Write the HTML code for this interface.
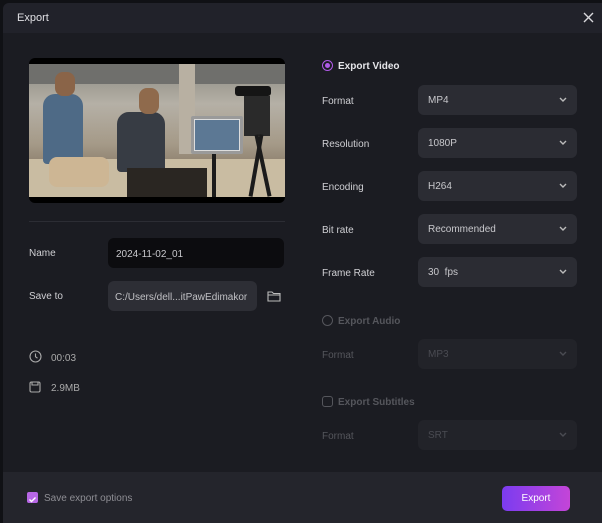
<!DOCTYPE html>
<html><head><style>
*{margin:0;padding:0;box-sizing:border-box}
body{width:602px;height:523px;background:#101115;font-family:"Liberation Sans",sans-serif;overflow:hidden;position:relative;color:#d8d8dc}
.win{position:absolute;left:3px;top:3px;right:0;bottom:0;background:#1b1c22;border-radius:6px 0 0 0;overflow:hidden}
.hdr{position:absolute;left:0;top:0;right:0;height:30px;background:#21222a;}
.hdr span{position:absolute;left:14px;top:9px;font-size:11px;color:#e0e0e4}
.ft{position:absolute;left:0;right:0;top:469px;bottom:0;background:#24252c}
.a{position:absolute;font-size:10px}
.lbl{color:#d0d0d4}
.sel{position:absolute;left:415px;width:159px;height:30px;background:#2b2c33;border-radius:6px;font-size:10px;color:#c8c8cc;padding:10px 0 0 10px}
.sel.dis{background:#222329;color:#4a4b52}
.sel svg{position:absolute;right:10px;top:12px}
</style></head><body>
<div class="win">
<div class="hdr"><span>Export</span>
<svg style="position:absolute;right:8px;top:9px" width="11" height="11"><path d="M1 1L10 10M10 1L1 10" stroke="#d8d8dc" stroke-width="1.4"/></svg></div>
<div style="position:absolute;left:26px;top:55px;width:256px;height:145px;background:#000;border-radius:6px"></div>
<div style="position:absolute;left:26px;top:61px;width:256px;height:133px;overflow:hidden;background:linear-gradient(180deg,#8a8880 0%,#b5b0a6 30%,#a59a88 60%,#6a5a48 100%)">
 <div style="position:absolute;left:0;top:0;width:256px;height:20px;background:#6f6f6c"></div>
 <div style="position:absolute;left:150px;top:0;width:16px;height:90px;background:#b8b0a2"></div>
 <div style="position:absolute;left:0;top:95px;width:256px;height:38px;background:#c9bca2"></div>
 <div style="position:absolute;left:14px;top:30px;width:40px;height:70px;background:#4e6a86;border-radius:12px 12px 4px 4px"></div>
 <div style="position:absolute;left:26px;top:8px;width:20px;height:24px;background:#8a6448;border-radius:8px"></div>
 <div style="position:absolute;left:20px;top:93px;width:60px;height:30px;background:#cdb694;border-radius:8px"></div>
 <div style="position:absolute;left:88px;top:48px;width:48px;height:60px;background:#373c44;border-radius:12px 12px 4px 4px"></div>
 <div style="position:absolute;left:110px;top:24px;width:20px;height:26px;background:#8f6a4c;border-radius:8px"></div>
 <div style="position:absolute;left:98px;top:104px;width:80px;height:30px;background:#2a2622"></div>
 <div style="position:absolute;left:162px;top:52px;width:52px;height:38px;background:#ddd;border-radius:2px;border:3px solid #9a9a9a"></div>
 <div style="position:absolute;left:166px;top:56px;width:44px;height:30px;background:#5c7894"></div>
 <div style="position:absolute;left:206px;top:22px;width:36px;height:10px;background:#151515;border-radius:3px"></div>
 <div style="position:absolute;left:215px;top:32px;width:26px;height:40px;background:#2a2a2a"></div>
 <div style="position:absolute;left:225px;top:70px;width:4px;height:63px;background:#1b1b1b;transform:rotate(10deg)"></div>
 <div style="position:absolute;left:232px;top:70px;width:4px;height:63px;background:#1b1b1b;transform:rotate(-12deg)"></div>
 <div style="position:absolute;left:183px;top:90px;width:4px;height:43px;background:#1b1b1b"></div>
</div>
<div style="position:absolute;left:26px;top:218px;width:256px;height:1px;background:#2c2d34"></div>
<div class="a lbl" style="left:26px;top:245px">Name</div>
<div style="position:absolute;left:105px;top:235px;width:176px;height:30px;background:#0c0c0f;border-radius:6px;font-size:10px;color:#c8c8cc;padding:11px 0 0 8px">2024-11-02_01</div>
<div class="a lbl" style="left:26px;top:288px">Save to</div>
<div style="position:absolute;left:105px;top:278px;width:149px;height:30px;background:#2d2e35;border-radius:6px;font-size:10px;color:#c0c0c4;padding:11px 0 0 7px;white-space:nowrap;overflow:hidden">C:/Users/dell...itPawEdimakor</div>
<svg style="position:absolute;left:264px;top:287px" width="14" height="12"><path d="M1 2h4l1.5 1.5H13V11H1z M1 5h12" fill="none" stroke="#bbb" stroke-width="1.1"/></svg>
<svg style="position:absolute;left:26px;top:347px" width="13" height="13"><circle cx="6.5" cy="6.5" r="5.5" fill="none" stroke="#aaa" stroke-width="1.1"/><path d="M6.5 3.5v3.2l2 1.5" fill="none" stroke="#aaa" stroke-width="1.1"/></svg>
<div class="a" style="left:48px;top:350px;color:#aaa">00:03</div>
<svg style="position:absolute;left:26px;top:378px" width="12" height="12"><rect x="1" y="1" width="10" height="10" rx="1.5" fill="none" stroke="#aaa" stroke-width="1.1"/><path d="M3 1v3h6V1" fill="none" stroke="#aaa" stroke-width="1.1"/></svg>
<div class="a" style="left:48px;top:380px;color:#aaa">2.9MB</div>
<div style="position:absolute;left:319px;top:57px;width:11px;height:11px;border-radius:50%;border:1.5px solid #b05ae8;"><div style="margin:1.5px;width:5px;height:5px;border-radius:50%;background:#b05ae8"></div></div>
<div class="a" style="left:335px;top:58px;font-weight:bold;color:#e6e6ea">Export Video</div>
<div class="a lbl" style="left:319px;top:93px">Format</div>
<div class="sel" style="top:82px">MP4<svg width="8" height="6"><path d="M1 1l3 3 3-3" fill="none" stroke="#bbb" stroke-width="1.4"/></svg></div>
<div class="a lbl" style="left:319px;top:136px">Resolution</div>
<div class="sel" style="top:125px">1080P<svg width="8" height="6"><path d="M1 1l3 3 3-3" fill="none" stroke="#bbb" stroke-width="1.4"/></svg></div>
<div class="a lbl" style="left:319px;top:179px">Encoding</div>
<div class="sel" style="top:168px">H264<svg width="8" height="6"><path d="M1 1l3 3 3-3" fill="none" stroke="#bbb" stroke-width="1.4"/></svg></div>
<div class="a lbl" style="left:319px;top:222px">Bit rate</div>
<div class="sel" style="top:211px">Recommended<svg width="8" height="6"><path d="M1 1l3 3 3-3" fill="none" stroke="#bbb" stroke-width="1.4"/></svg></div>
<div class="a lbl" style="left:319px;top:265px">Frame Rate</div>
<div class="sel" style="top:254px">30&nbsp; fps<svg width="8" height="6"><path d="M1 1l3 3 3-3" fill="none" stroke="#bbb" stroke-width="1.4"/></svg></div>
<div style="position:absolute;left:319px;top:312px;width:11px;height:11px;border-radius:50%;border:1.2px solid #55565c"></div>
<div class="a" style="left:335px;top:313px;font-weight:bold;color:#55565c">Export Audio</div>
<div class="a" style="left:319px;top:347px;color:#55565c">Format</div>
<div class="sel dis" style="top:336px">MP3<svg width="8" height="6"><path d="M1 1l3 3 3-3" fill="none" stroke="#4a4b52" stroke-width="1.4"/></svg></div>
<div style="position:absolute;left:319px;top:393px;width:11px;height:11px;border-radius:3px;border:1.2px solid #55565c"></div>
<div class="a" style="left:335px;top:394px;font-weight:bold;color:#55565c">Export Subtitles</div>
<div class="a" style="left:319px;top:428px;color:#55565c">Format</div>
<div class="sel dis" style="top:417px">SRT<svg width="8" height="6"><path d="M1 1l3 3 3-3" fill="none" stroke="#4a4b52" stroke-width="1.4"/></svg></div>
<div class="ft"></div>
<div style="position:absolute;left:24px;top:489px;width:11px;height:11px;border-radius:2px;background:#b767e6"><svg width="11" height="11"><path d="M2.5 5.5l2 2 4-4" fill="none" stroke="#fff" stroke-width="1.4"/></svg></div>
<div class="a" style="left:41px;top:490px;color:#8e8e94">Save export options</div>
<div style="position:absolute;left:499px;top:483px;width:68px;height:25px;border-radius:5px;background:linear-gradient(90deg,#7b3cf0,#c445d8);color:#fff;font-size:10px;text-align:center;line-height:25px">Export</div>
</div>
</body></html>
